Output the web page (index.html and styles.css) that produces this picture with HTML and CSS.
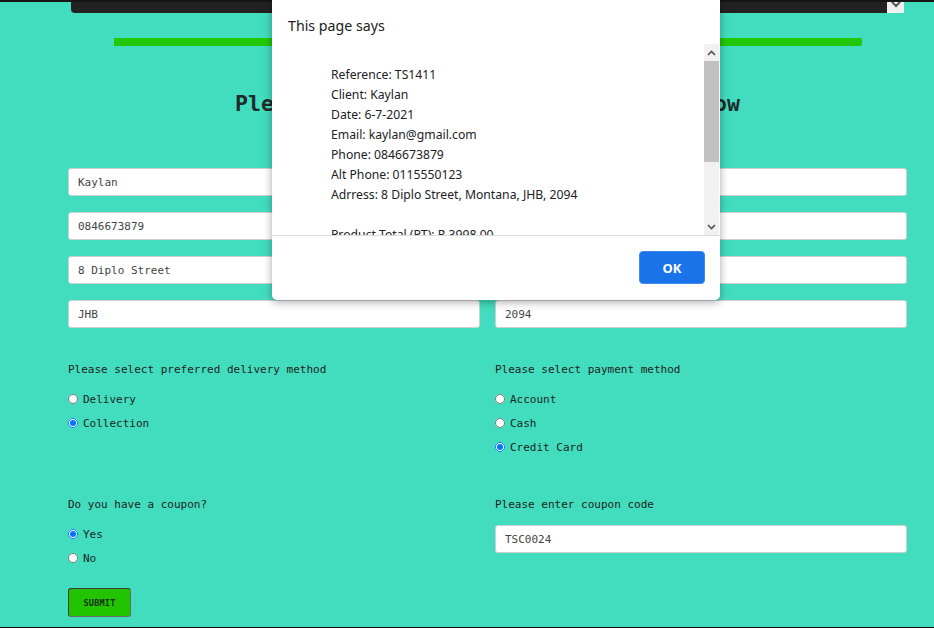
FILE: index.html
```html
<!DOCTYPE html>
<html lang="en">
<head>
<meta charset="utf-8">
<title>Order form</title>
<link rel="stylesheet" href="styles.css">
</head>
<body>
<div class="topline"></div>
<main class="page">
  <div class="topbar">
    <div class="topbar-dark"></div>
    <div class="topbar-scroll">
      <svg width="10" height="6" viewBox="0 0 10 6"><polyline points="1,0 5,4 9,0" fill="none" stroke="#555" stroke-width="2"/></svg>
    </div>
  </div>
  <div class="greenbar"></div>
  <h2 class="title">Please fill in your order details below</h2>

  <div class="fields">
    <input class="field" type="text" value="Kaylan">
    <input class="field" type="text" value="kaylan@gmail.com">
    <input class="field" type="text" value="0846673879">
    <input class="field" type="text" value="0115550123">
    <input class="field" type="text" value="8 Diplo Street">
    <input class="field" type="text" value="Montana">
    <input class="field" type="text" value="JHB">
    <input class="field" type="text" value="2094">
  </div>

  <div class="groups">
    <div class="group">
      <div class="group-label">Please select preferred delivery method</div>
      <label class="option"><input type="radio" name="delivery"> Delivery</label>
      <label class="option"><input type="radio" name="delivery" checked> Collection</label>
    </div>
    <div class="group">
      <div class="group-label">Please select payment method</div>
      <label class="option"><input type="radio" name="pay"> Account</label>
      <label class="option"><input type="radio" name="pay"> Cash</label>
      <label class="option"><input type="radio" name="pay" checked> Credit Card</label>
    </div>
  </div>

  <div class="groups coupon">
    <div class="group">
      <div class="group-label">Do you have a coupon?</div>
      <label class="option"><input type="radio" name="coupon" checked> Yes</label>
      <label class="option"><input type="radio" name="coupon"> No</label>
      <button class="submit" type="button">SUBMIT</button>
    </div>
    <div class="group">
      <div class="group-label">Please enter coupon code</div>
      <input class="field coupon-field" type="text" value="TSC0024">
    </div>
  </div>
</main>
<div class="bottomline"></div>

<div class="dialog">
  <div class="dialog-title">This page says</div>
  <div class="dialog-body">
    <div class="dialog-text">
      <div>Reference: TS1411</div>
      <div>Client: Kaylan</div>
      <div>Date: 6-7-2021</div>
      <div>Email: kaylan@gmail.com</div>
      <div>Phone: 0846673879</div>
      <div>Alt Phone: 0115550123</div>
      <div>Adrress: 8 Diplo Street, Montana, JHB, 2094</div>
      <div>&nbsp;</div>
      <div>Product Total (PT): R 3998.00</div>
    </div>
    <div class="scrollbar">
      <div class="sb-btn">
        <svg width="9" height="6" viewBox="0 0 9 6"><polyline points="1,5 4.5,1.5 8,5" fill="none" stroke="#505050" stroke-width="1.6"/></svg>
      </div>
      <div class="sb-thumb"></div>
      <div class="sb-space"></div>
      <div class="sb-btn">
        <svg width="9" height="6" viewBox="0 0 9 6"><polyline points="1,1 4.5,4.5 8,1" fill="none" stroke="#505050" stroke-width="1.6"/></svg>
      </div>
    </div>
  </div>
  <div class="dialog-footer">
    <button class="ok" type="button">OK</button>
  </div>
</div>
</body>
</html>
```

FILE: styles.css
```css
* { box-sizing: border-box; }

html, body {
  margin: 0;
  height: 628px;
  overflow: hidden;
}

body {
  background: #42ddbe;
  font-family: "DejaVu Sans Mono", monospace;
  color: #222;
}

.topline {
  height: 2px;
  background: #151515;
}

.page {
  width: 839px;
  margin-left: 68px;
}

.topbar {
  display: flex;
  height: 11px;
  margin: 0 3px;
}

.topbar-dark {
  flex: 1;
  background: #222;
  border-bottom-left-radius: 4px;
}

.topbar-scroll {
  width: 17px;
  background: #f0f0f0;
  display: flex;
  justify-content: center;
  align-items: flex-start;
}

.greenbar {
  width: 748px;
  height: 8px;
  margin: 25px auto 0;
  background: #22c805;
  border-radius: 0 2px 2px 0;
}

.title {
  margin: 45px 0 0;
  text-align: center;
  font-size: 21.5px;
  line-height: 26px;
  font-weight: bold;
  color: #1f2a2a;
}

.fields {
  display: grid;
  grid-template-columns: 1fr 1fr;
  column-gap: 15px;
  row-gap: 16px;
  margin-top: 51px;
}

.field {
  display: block;
  width: 100%;
  height: 28px;
  margin: 0;
  padding: 0 9px;
  border: 1px solid #cfcfcf;
  border-radius: 3px;
  background: #fff;
  font: 11px "DejaVu Sans Mono", monospace;
  color: #444;
  outline: none;
}

.groups {
  display: grid;
  grid-template-columns: 1fr 1fr;
  column-gap: 15px;
  margin-top: 35px;
}

.groups.coupon {
  margin-top: 39px;
}

.group {
  display: flex;
  flex-direction: column;
  align-items: flex-start;
}

.group-label {
  font-size: 11px;
  line-height: 14px;
  margin-bottom: 10px;
  color: #222;
}

.option {
  display: flex;
  align-items: center;
  height: 24px;
  font-size: 11px;
  color: #1d2626;
}

.option input {
  width: 10px;
  height: 10px;
  margin: 0 5px 0 0;
  accent-color: #0075ff;
}

.submit {
  margin-top: 18px;
  width: 63px;
  height: 29px;
  padding: 0;
  background: #22c400;
  border: 1px solid #3a3a3a;
  border-right-color: #6a6a6a;
  border-bottom-color: #6a6a6a;
  border-radius: 3px;
  font: bold 8.5px "DejaVu Sans Mono", monospace;
  color: #163016;
  letter-spacing: 0.2px;
}

.coupon-field {
  margin-top: 3px;
}

.bottomline {
  margin-top: 10px;
  height: 1px;
  background: #111;
}

/* alert dialog overlay */
.dialog {
  position: absolute;
  left: 272px;
  top: 0;
  width: 448px;
  height: 300px;
  background: #fff;
  border-radius: 0 0 5px 5px;
  box-shadow: 0 2px 8px rgba(0, 0, 0, 0.35);
  font-family: "Segoe UI", "Noto Sans", sans-serif;
  color: #202124;
  display: flex;
  flex-direction: column;
}

.dialog-title {
  height: 44px;
  padding: 17px 16px 0;
  font-size: 14.2px;
  line-height: 18px;
}

.dialog-body {
  display: flex;
  height: 192px;
  border-bottom: 1px solid #dadce0;
}

.dialog-text {
  flex: 1;
  overflow: hidden;
  padding: 21px 0 0 59px;
  font-size: 12.2px;
  line-height: 20px;
  white-space: nowrap;
}

.scrollbar {
  width: 15px;
  margin-right: 1px;
  background: #f1f1f1;
  display: flex;
  flex-direction: column;
}

.sb-btn {
  height: 17px;
  display: flex;
  align-items: center;
  justify-content: center;
}

.sb-thumb {
  height: 101px;
  background: #c1c1c1;
}

.sb-space {
  flex: 1;
}

.dialog-footer {
  flex: 1;
  display: flex;
  justify-content: flex-end;
  align-items: flex-start;
  padding: 15px 15px 0 0;
}

.ok {
  width: 66px;
  height: 33px;
  background: #1a73e8;
  border: 1px solid #3d8af0;
  border-radius: 4px;
  color: #fff;
  font: bold 13px "Noto Sans", sans-serif;
}
```
